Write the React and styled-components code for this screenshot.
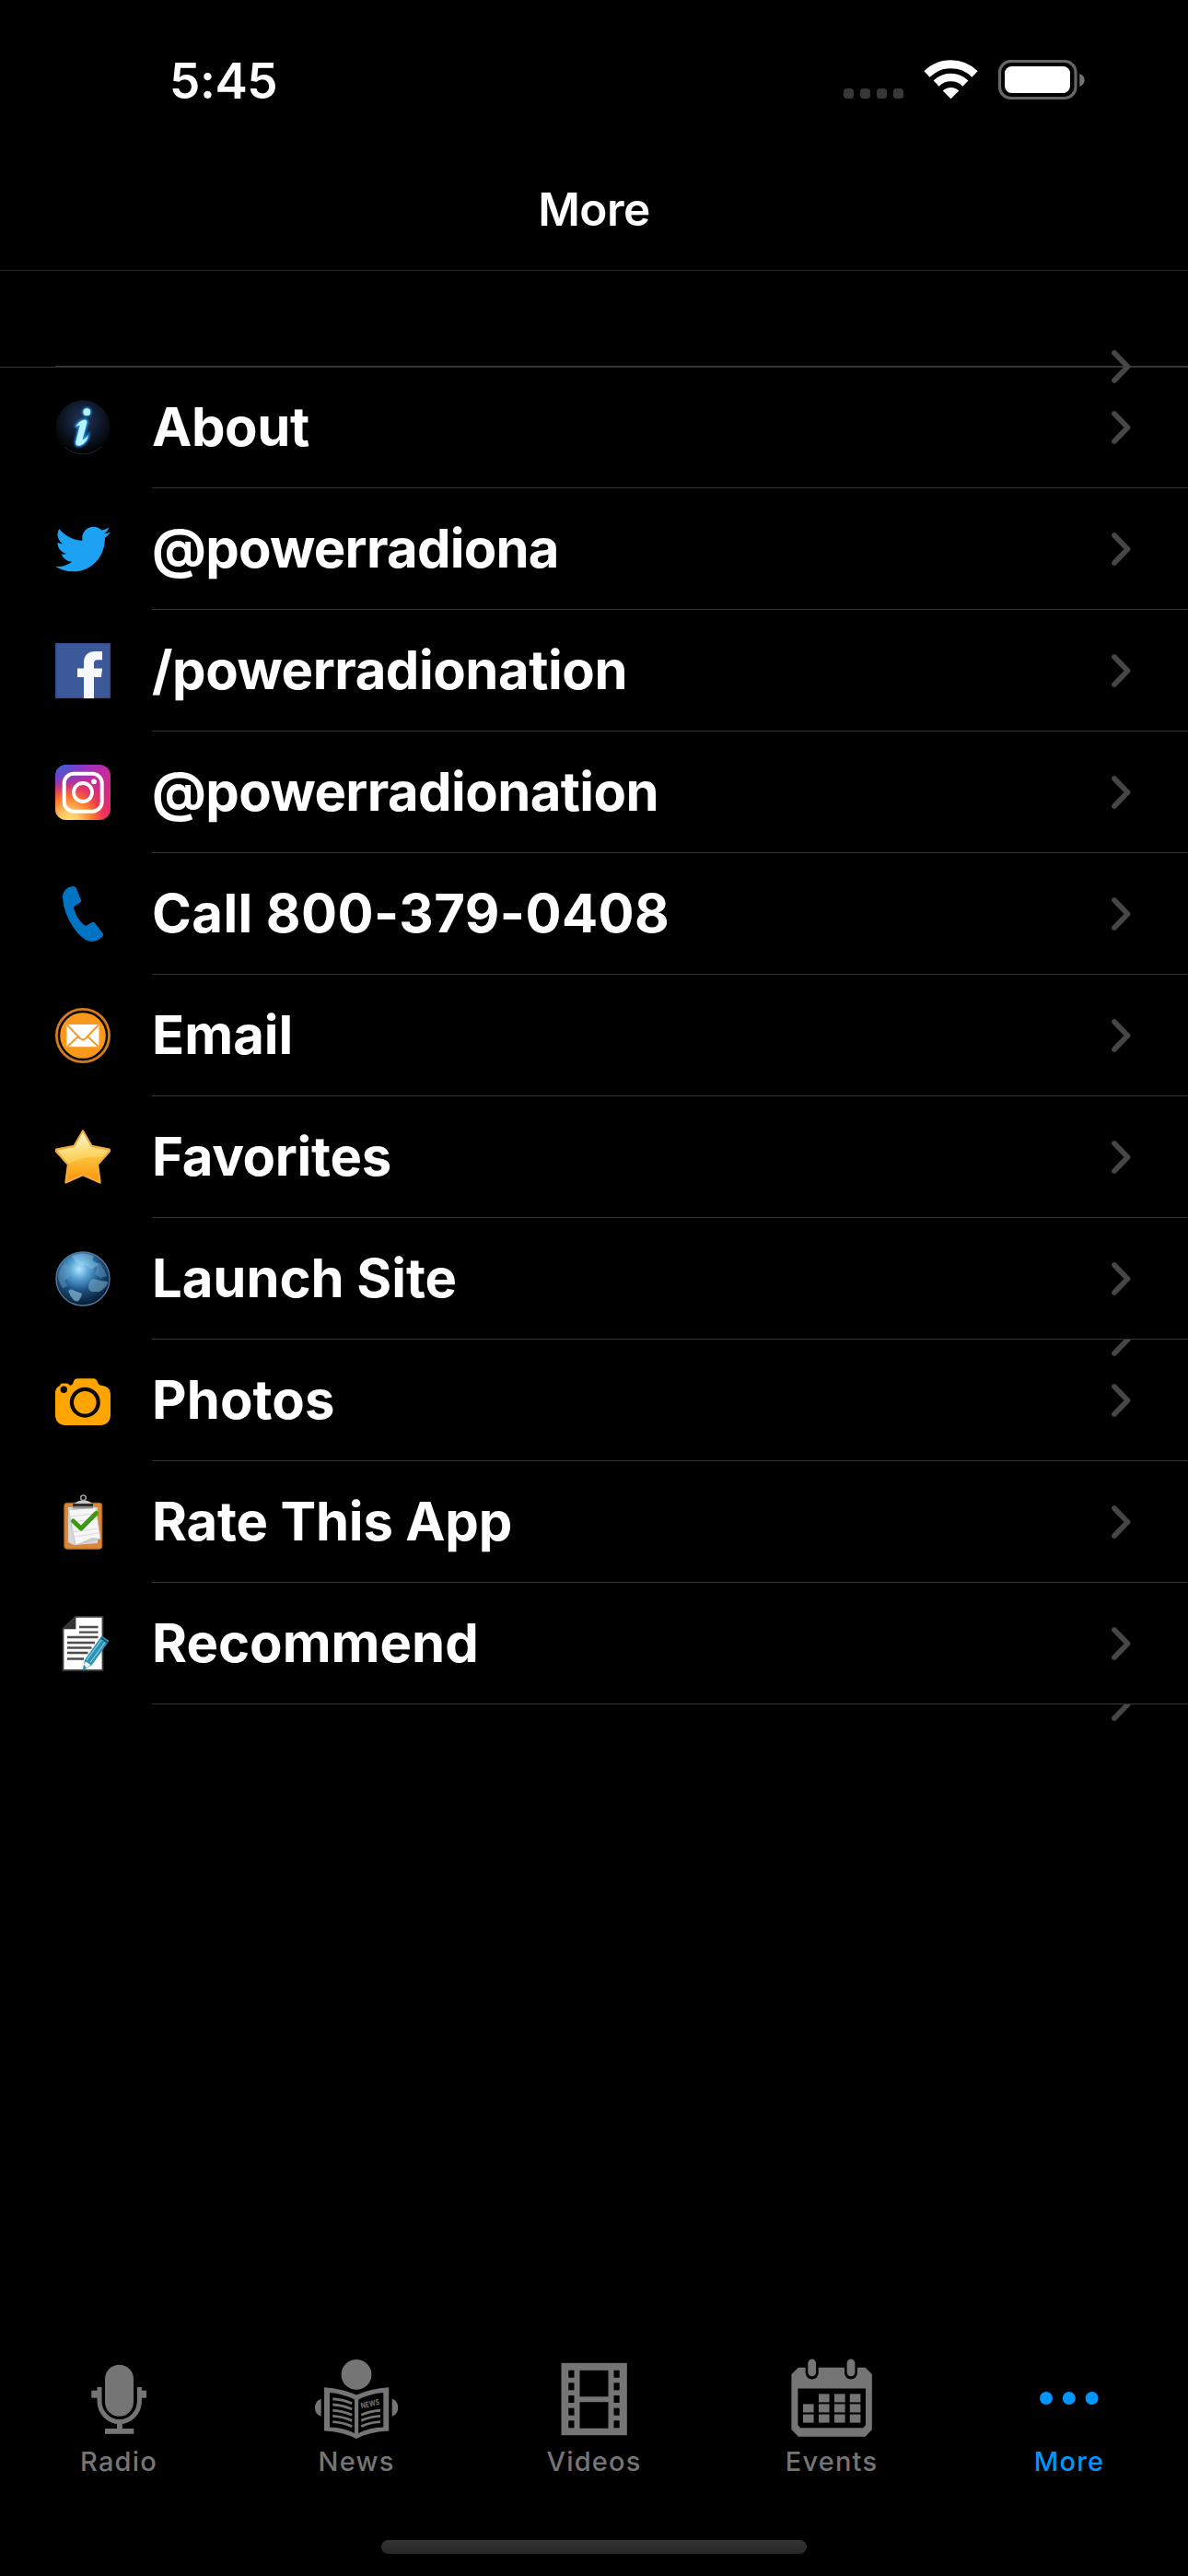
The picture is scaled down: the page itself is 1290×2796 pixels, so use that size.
import React from 'react'
import styled, { createGlobalStyle } from 'styled-components'
import { FaTwitter } from 'react-icons/fa'


const GlobalStyle = createGlobalStyle`
  *{
    box-sizing:border-box;
  }
  body{
    margin:0;
    background:#000;
    color:#fff;
    font-family:Inter, "Liberation Sans", sans-serif;
  }
`;

const Screen = styled.div`
  width:1290px;
  height:2796px;
  display:flex;
  flex-direction:column;
  background:#000;
  overflow:hidden;
`;

const StatusBar = styled.header`
  height:176px;
  flex:none;
  display:flex;
  justify-content:space-between;
  padding:0 112px 0 184px;
`;

const Time = styled.span`
  margin-top:56px;
  font-size:53px;
  line-height:64px;
  font-weight:570;
  letter-spacing:-0.4px;
`;

const StatusIcons = styled.div`
  display:flex;
  margin-top:65px;

  svg{
    display:block;
  }
`;

const NavBar = styled.div`
  height:118px;
  flex:none;
  display:flex;
  justify-content:center;
  padding-top:21px;
  border-bottom:1px solid #29292b;

  h1{
    margin:0;
    font-size:49.5px;
    line-height:60px;
    font-weight:570;
    letter-spacing:-0.5px;
  }
`;

const SectionHeader = styled.div`
  height:104px;
  flex:none;
  margin-left:60px;
  border-bottom:1px solid #353537;
`;

const List = styled.ul`
  list-style:none;
  margin:0;
  padding:0;
  flex:1;
  box-shadow:inset 0 1px 0 #353537;
`;

const Row = styled.li`
  height:132px;
  display:flex;
  align-items:center;
  padding-left:60px;
`;

const IconBox = styled.span`
  width:60px;
  height:60px;
  margin-right:45px;
  display:flex;

  svg{
    width:60px;
    height:60px;
    overflow:visible;
  }
`;

const RowBody = styled.div`
  flex:1;
  height:100%;
  display:flex;
  align-items:center;
  justify-content:space-between;
  padding-right:60px;
  border-bottom:1px solid #353537;
`;

const Label = styled.span`
  font-size:58px;
  line-height:72px;
  font-weight:700;
  white-space:nowrap;
  margin-bottom:1px;
  letter-spacing:${({ $track }) => $track}px;
`;

/* empty cell: it has no height, its arrow hangs over the neighbours */
const EmptyCell = styled.li`
  height:0;
  position:relative;

  span{
    position:absolute;
    right:60px;
    top:${({ $cut }) => ($cut ? 0 : -20)}px;
    height:${({ $cut }) => ($cut ? 20 : 40)}px;
    overflow:hidden;
    display:flex;
    align-items:flex-end;
  }
`;

const TabBar = styled.nav`
  height:202px;
  flex:none;
  display:grid;
  grid-template-columns:repeat(5, 1fr);
`;

const Tab = styled.div`
  display:flex;
  flex-direction:column;
  align-items:center;
  color:${({ $active }) => ($active ? '#0096ff' : '#757575')};

  svg{
    display:block;
    width:90px;
    height:96px;
  }

  span{
    margin-top:3px;
    font-size:29px;
    line-height:36px;
    font-weight:460;
    letter-spacing:1.2px;
  }
`;

const HomeArea = styled.div`
  height:39px;
  flex:none;
  display:flex;
  justify-content:center;
`;

const HomeIndicator = styled.div`
  width:462px;
  height:15px;
  border-radius:8px;
  background:linear-gradient(#343434, #272727);
`;


const Chevron = () => (
  <svg width="24" height="40" viewBox="0 0 24 40" style={{ flex: 'none' }}>
    <path d="M4 5 L18.5 20 L4 35" fill="none" stroke="#464649" strokeWidth="5.8" strokeLinecap="round" strokeLinejoin="round" />
  </svg>
)

const StatusGlyphs = () => (
  <svg width="262" height="44" viewBox="916 65 262 44">
    {[916, 934, 952, 970].map((x) => (
      <rect key={x} x={x} y="96" width="11" height="11" rx="3.5" fill="#373737" />
    ))}
    <g fill="none" stroke="#fff">
      <path d="M1006.5 80.5 A37 37 0 0 1 1058.5 80.5" strokeWidth="9" />
      <path d="M1016.6 90.6 A22.5 22.5 0 0 1 1048.4 90.6" strokeWidth="8.6" />
    </g>
    <path d="M1032.5 107.3 L1023.7 98.6 A12.5 12.5 0 0 1 1041.3 98.6 Z" fill="#fff" />
    <rect x="1085.5" y="66.5" width="82.5" height="40" rx="12" fill="none" stroke="#666" strokeWidth="3.2" />
    <rect x="1091" y="72" width="71" height="29" rx="7.5" fill="#fff" />
    <path d="M1172.3 80 C1179.5 82.5 1179.5 91.5 1172.3 94 Z" fill="#757575" />
  </svg>
)

const InfoIcon = () => (
  <svg viewBox="0 0 60 60">
    <defs>
      <radialGradient id="info" cx="0.5" cy="0.35" r="0.6">
        <stop offset="0" stopColor="#22365c" />
        <stop offset="0.5" stopColor="#121c30" />
        <stop offset="1" stopColor="#020304" />
      </radialGradient>
      <filter id="glow" x="-50%" y="-50%" width="200%" height="200%">
        <feGaussianBlur stdDeviation="1.2" />
      </filter>
    </defs>
    <circle cx="30" cy="30" r="29.5" fill="url(#info)" />
    <path d="M10 51 A29 29 0 0 0 50 51" fill="none" stroke="#242528" strokeWidth="1" />
    <g fill="#1f8fe8" stroke="#1f8fe8" strokeWidth="3" filter="url(#glow)">
      <circle cx="34.3" cy="13.2" r="3.6" />
      <path d="M22 29.5 Q26 22 32.5 21.5 Q34.8 22 34.4 25 L29.5 43 Q32 43 35.8 38.5 Q35 46 27.5 49.5 Q22 51 22.2 46 L26.6 28 Q25 27 22 29.5 Z" />
    </g>
    <g fill="#b8f2ff">
      <circle cx="34.3" cy="13.2" r="3.9" />
      <path d="M22 29.5 Q26 22 32.5 21.5 Q34.8 22 34.4 25 L29.5 43 Q32 43 35.8 38.5 Q35 46 27.5 49.5 Q22 51 22.2 46 L26.6 28 Q25 27 22 29.5 Z" />
    </g>
  </svg>
)

const TwitterIcon = () => <FaTwitter color="#1da1f2" />

const FacebookIcon = () => (
  <svg viewBox="0 0 60 60">
    <rect width="60" height="60" fill="#34508d" />
    <rect x="1.5" y="1.5" width="57" height="57" fill="#3c5a9a" />
    <path d="M31 60 V37 H24 V27.5 H31 V21.5 C31 13 36 9 43.5 9 H51 V18.3 H46.5 C43 18.3 42 19.8 42 22.5 V27.5 H51 L50 37 H42 V60 Z" fill="#f7f8fb" />
  </svg>
)

const InstagramIcon = () => (
  <svg viewBox="0 0 60 60">
    <defs>
      <linearGradient id="igBase" x1="0.2" y1="0" x2="0.8" y2="1">
        <stop offset="0" stopColor="#7a3bd0" />
        <stop offset="0.4" stopColor="#c22ba0" />
        <stop offset="1" stopColor="#ea2a63" />
      </linearGradient>
      <radialGradient id="igWarm" cx="0.25" cy="1.02" r="0.85">
        <stop offset="0" stopColor="#ffdd78" />
        <stop offset="0.22" stopColor="#ffc761" />
        <stop offset="0.5" stopColor="#fb7a2c" />
        <stop offset="0.75" stopColor="#ee3a4e" stopOpacity="0.7" />
        <stop offset="1" stopColor="#d92e7f" stopOpacity="0" />
      </radialGradient>
      <radialGradient id="igCool" cx="0.1" cy="0" r="0.5">
        <stop offset="0" stopColor="#3f63d8" />
        <stop offset="1" stopColor="#6a3ad0" stopOpacity="0" />
      </radialGradient>
    </defs>
    <rect width="60" height="60" rx="12" fill="url(#igBase)" />
    <rect width="60" height="60" rx="12" fill="url(#igWarm)" />
    <rect width="60" height="60" rx="12" fill="url(#igCool)" />
    <g fill="none" stroke="#fff">
      <rect x="9.7" y="9.7" width="41" height="41" rx="10.5" strokeWidth="4" />
      <circle cx="30" cy="30" r="10" strokeWidth="3.8" />
    </g>
    <circle cx="42" cy="18.3" r="2.9" fill="#fff" />
  </svg>
)

const PhoneIcon = () => (
  <svg viewBox="0 0 60 60">
    <path d="M19.5 0 Q22 0 22.8 2 L28 14.8 Q28.6 16.8 27 17.8 L21 21.4 Q19.7 22.4 20.3 24.5 Q23.5 36 32 42.2 Q33.5 43.2 34.8 42 L40 39 Q41.6 38.3 43 39.8 L51.6 51 Q52.8 52.6 51.6 54 Q44.5 61.5 36.5 59.6 Q28 57 19.5 44.5 Q9 28.5 8 12.5 Q8 1.5 19.5 0 Z" fill="#0173c3" />
  </svg>
)

const EmailIcon = () => (
  <svg viewBox="0 0 60 60">
    <circle cx="30" cy="30" r="28.6" fill="#0c0600" stroke="#d07d1b" strokeWidth="2.8" />
    <circle cx="30" cy="30" r="24.8" fill="#f8981d" />
    <rect x="12.5" y="18" width="35" height="24.2" fill="#fff" />
    <g fill="none" stroke="#f8981d" strokeWidth="1.8">
      <path d="M13 18.5 L27 33 Q30 36 33 33 L47 18.5" />
      <path d="M13 42 L25 31" />
      <path d="M47 42 L35 31" />
    </g>
  </svg>
)

const StarIcon = () => (
  <svg viewBox="0 0 60 60">
    <defs>
      <linearGradient id="star" x1="0" y1="0" x2="0" y2="1">
        <stop offset="0" stopColor="#fff2b8" />
        <stop offset="0.45" stopColor="#f9cb45" />
        <stop offset="1" stopColor="#ff8f08" />
      </linearGradient>
      <linearGradient id="starShine" x1="0.1" y1="0.1" x2="0.5" y2="1">
        <stop offset="0" stopColor="#fff" stopOpacity="0.5" />
        <stop offset="1" stopColor="#ffe27a" stopOpacity="0.35" />
      </linearGradient>
    </defs>
    <path d="M30 1.6 L39.5 18 L58.8 21.8 L58.8 23.8 L46 38 L48.5 57.5 L30 49.2 L11.5 57.5 L14 38 L1.2 23.8 L1.2 21.8 L20.5 18 Z" fill="url(#star)" stroke="#f2ab3e" strokeWidth="2.4" strokeLinejoin="round" />
    <path d="M30 3 L39 19 L58 22.8 L52 29.5 Q30 28 14.5 37.5 L2 22.8 L21 19 Z" fill="url(#starShine)" />
  </svg>
)

const GlobeIcon = () => (
  <svg viewBox="0 0 60 60">
    <defs>
      <radialGradient id="globe" cx="0.43" cy="0.32" r="0.66">
        <stop offset="0" stopColor="#aee8ff" />
        <stop offset="0.3" stopColor="#549dd0" />
        <stop offset="0.6" stopColor="#1f5282" />
        <stop offset="1" stopColor="#081f36" />
      </radialGradient>
      <filter id="soft"><feGaussianBlur stdDeviation="0.7" /></filter>
    </defs>
    <circle cx="30" cy="30" r="29" fill="url(#globe)" stroke="#52799b" strokeWidth="1.4" />
    <path d="M18 5 Q30 0 42 5 L40 10 L47 14 L40 20 L33 15 L28 16 L22 12 Z" fill="#bcefff" opacity="0.3" filter="url(#soft)" />
    <path d="M36 40 Q36 31 42 30 L49 32 L57 33 Q57 37 54 39 Q50 45 44 44 Q37 45 36 40 Z" fill="#77abcc" opacity="0.6" filter="url(#soft)" />
    <path d="M14 43 Q17 40 21 43 L29 46 Q29 49 26 53 Q24 56 20 53 Q16 49 14 43 Z" fill="#88b9d6" opacity="0.7" filter="url(#soft)" />
    <path d="M3 26 Q5 17 11 13 L18 20 L16 27 L10 32 L13 38 L8 40 Q3 33 3 26 Z" fill="#6aa6cf" opacity="0.45" filter="url(#soft)" />
    <path d="M43 13 L49 13 L54 22 L56 27 L49 29 L43 25 L45 19 Z" fill="#6aa5cb" opacity="0.45" filter="url(#soft)" />
  </svg>
)

const CameraIcon = () => (
  <svg viewBox="0 0 60 60">
    <path d="M5 14 Q5.5 11.6 8 11.6 H12 Q14.5 11.6 15.5 13.6 H17 Q19 13.4 20 9 Q21 6.2 23.5 6.2 H42 Q44.5 6.2 45.5 9 Q46.8 13.6 50 13.8 Q60 15 60 23 V47 Q59 56 50 57 H10 Q1 56 0 47 V21 Q0.5 16 5 14 Z" fill="#ffa500" />
    <circle cx="32.3" cy="32.2" r="14.4" fill="none" stroke="#0a0700" strokeWidth="4.2" />
    <circle cx="9.3" cy="18.3" r="3.7" fill="#0a0700" />
  </svg>
)

const ClipboardIcon = () => (
  <svg viewBox="0 0 60 60">
    <rect x="9.8" y="9.3" width="41" height="50" rx="3" fill="#d9883a" stroke="#a9601c" strokeWidth="1" />
    <path d="M14 14 H46 V53 L20 55 L14 52 Z" fill="#d6d6d9" />
    <path d="M14.5 17 L44 14 L49 48 L22 55 Z" fill="#f6f6f7" stroke="#c0c0c4" strokeWidth="0.8" />
    <path d="M17 24 L44 21 M18 30 L45 27 M19 41 L46 37 M21 46 L47 42" stroke="#d6d6dc" strokeWidth="0.9" />
    <path d="M22 55 L37 51.5 L49 48 L40 47 Z" fill="#c9c9cc" />
    <circle cx="30.5" cy="3.8" r="2.8" fill="none" stroke="#9a9a9a" strokeWidth="1.6" />
    <path d="M20 11 Q22 8 27 6.8 H34 Q39 8 41 11 V15 H20 Z" fill="#c4c7c9" />
    <rect x="19" y="10" width="22" height="3" fill="#2d2d2d" />
    <rect x="19" y="13" width="22" height="2.4" fill="#8e8e8e" />
    <path d="M19.5 29 L28 37 L44.5 20.5" fill="none" stroke="#3d9a10" strokeWidth="5" strokeLinecap="round" strokeLinejoin="round" />
  </svg>
)

const DocumentIcon = () => (
  <svg viewBox="0 0 60 60">
    <path d="M22 0.8 H51.5 V59 H8.5 V14 Z" fill="#fdfdfd" stroke="#3b3b3b" strokeWidth="1.8" />
    <path d="M8.8 14.2 L22.4 0.8 V14.2 Z" fill="#333" />
    <path d="M26 12 H46.5 M26 17.7 H46.5 M13 23 H46.5 M13 29 H43 M13 34.5 H39.5 M13 40 H35.5 M13 46.5 H31" stroke="#4d4d4d" strokeWidth="2.3" />
    <path d="M29.5 59.5 L32 47.5 L50.5 21.5 L58.5 27 L40 53 Z" fill="#2d93b5" />
    <path d="M34 48 L50 26 M38 50.5 L54 28.5" stroke="#8ccbe0" strokeWidth="1.2" />
    <path d="M49.5 23.5 L56.5 28.8" stroke="#0d4c63" strokeWidth="1.5" />
    <path d="M31 52.5 L33 49.5 L38.5 53 L34 56.5 Z" fill="#e8f4f8" />
  </svg>
)

const RadioIcon = () => (
  <svg viewBox="0 0 90 96" fill="currentColor">
    <rect x="30" y="11.8" width="31" height="56" rx="15.5" />
    <path d="M24 36 V51 A21.7 22.5 0 0 0 67.4 51 V36" fill="none" stroke="currentColor" strokeWidth="5" />
    <rect x="15.3" y="39.7" width="8" height="8" />
    <rect x="68" y="39.7" width="7" height="8" />
    <rect x="43" y="73" width="5.8" height="10" />
    <rect x="30" y="81" width="31.3" height="5.8" />
  </svg>
)

const NewsIcon = () => (
  <svg viewBox="0 0 90 96" fill="currentColor">
    <circle cx="45" cy="22.4" r="16.4" />
    <path fillRule="evenodd" d="M10 36.3 Q30 37.5 45 44.6 Q60 37.5 80.2 36.3 V83.6 Q60 84.5 45 92 Q30 84.5 10 83.6 Z M16 42 V79.6 Q31 80 43 86 V49.5 Q30 43 16 42 Z M74.3 42 Q60 43 47.2 49.5 V86 Q59 80 74.3 79.6 Z" />
    <path d="M6.7 48.8 Q0 51 0 58.2 Q0 65.5 6.7 67.8 Z" />
    <path d="M83.7 48.8 Q90.2 51 90.2 58.2 Q90.2 65.5 83.7 67.8 Z" />
    <g fill="none" stroke="currentColor" strokeWidth="2.9">
      {[48.8, 55, 61.2, 67.4, 73.6].map((y) => (
        <path key={y} d={`M19.3 ${y} Q31 ${y + 0.8} 40.2 ${y + 5}`} />
      ))}
      {[61.2, 67.4, 73.6].map((y) => (
        <path key={y} d={`M50.2 ${y + 5} Q59 ${y + 0.8} 71 ${y}`} />
      ))}
    </g>
    <text x="50.5" y="59.3" fontSize="8.5" fontWeight="700" textLength="20.5" lengthAdjust="spacingAndGlyphs" transform="rotate(-13 50.5 59.3)">NEWS</text>
  </svg>
)

const FilmIcon = () => (
  <svg viewBox="0 0 90 96">
    <rect x="9.5" y="9.8" width="71.3" height="78.4" fill="currentColor" />
    <rect x="29.5" y="17.8" width="31" height="28.5" />
    <rect x="29.5" y="52.2" width="31" height="28.5" />
    {[21.7, 35.3, 49, 62.7, 76.3].map((y) => (
      <React.Fragment key={y}>
        <rect x="17.3" y={y - 4} width="6.2" height="8" />
        <rect x="66.5" y={y - 4} width="6.2" height="8" />
      </React.Fragment>
    ))}
  </svg>
)

const CalendarIcon = () => (
  <svg viewBox="0 0 90 96" fill="currentColor">
    <path d="M9 15 H81.5 L88.6 22 V82 L81.5 89.6 H9 L1.7 82 V22 Z" stroke="currentColor" strokeWidth="0.6" strokeLinejoin="round" />
    <path d="M8.4 37.6 H82 V77 L79.5 80.2 H11 L8.4 77 Z" fill="#000" />
    {[23.7, 66].map((x) => (
      <rect key={x} x={x - 7} y="1" width="14" height="26.5" rx="7" fill="#000" />
    ))}
    {[23.7, 66].map((x) => (
      <rect key={x} x={x - 4.4} y="5.6" width="8.8" height="18.6" rx="4.4" />
    ))}
    {[43.4, 54.4, 65.6].map((y, row) =>
      [14, 31, 48, 64.8].map((x, col) =>
        row === 0 && col === 0 ? null : <rect key={x} x={x} y={y} width="11.6" height="9" />
      )
    )}
  </svg>
)

const MoreIcon = () => (
  <svg viewBox="0 0 90 96" fill="currentColor">
    <circle cx="20" cy="48" r="7" />
    <circle cx="44.8" cy="48" r="7" />
    <circle cx="69.6" cy="48" r="7" />
  </svg>
)


const items = [
  { name: 'About', icon: InfoIcon, track: -0.4 },
  { name: '@powerradiona', icon: TwitterIcon, track: -0.75 },
  { name: '/powerradionation', icon: FacebookIcon, track: -0.45 },
  { name: '@powerradionation', icon: InstagramIcon, track: -0.6 },
  { name: 'Call 800-379-0408', icon: PhoneIcon, track: 0.42 },
  { name: 'Email', icon: EmailIcon, track: 0 },
  { name: 'Favorites', icon: StarIcon, track: -0.3 },
  { name: 'Launch Site', icon: GlobeIcon, track: -0.05, emptyAfter: true },
  { name: 'Photos', icon: CameraIcon, track: 0.1 },
  { name: 'Rate This App', icon: ClipboardIcon, track: -0.2 },
  { name: 'Recommend', icon: DocumentIcon, track: 0, emptyAfter: true },
]

const tabs = [
  { name: 'Radio', icon: RadioIcon },
  { name: 'News', icon: NewsIcon },
  { name: 'Videos', icon: FilmIcon },
  { name: 'Events', icon: CalendarIcon },
  { name: 'More', icon: MoreIcon, active: true },
]

const App = () => {
  return (
    <Screen>
      <GlobalStyle />
      <StatusBar>
        <Time>5:45</Time>
        <StatusIcons><StatusGlyphs /></StatusIcons>
      </StatusBar>
      <NavBar><h1>More</h1></NavBar>
      <SectionHeader />
      <List>
        <EmptyCell><span><Chevron /></span></EmptyCell>
        {items.map(({ name, icon: Icon, track, emptyAfter }) => (
          <React.Fragment key={name}>
            <Row>
              <IconBox><Icon /></IconBox>
              <RowBody>
                <Label $track={track}>{name}</Label>
                <Chevron />
              </RowBody>
            </Row>
            {emptyAfter && <EmptyCell $cut><span><Chevron /></span></EmptyCell>}
          </React.Fragment>
        ))}
      </List>
      <TabBar>
        {tabs.map(({ name, icon: Icon, active }) => (
          <Tab key={name} $active={active}>
            <Icon />
            <span>{name}</span>
          </Tab>
        ))}
      </TabBar>
      <HomeArea><HomeIndicator /></HomeArea>
    </Screen>
  )
}

export default App
